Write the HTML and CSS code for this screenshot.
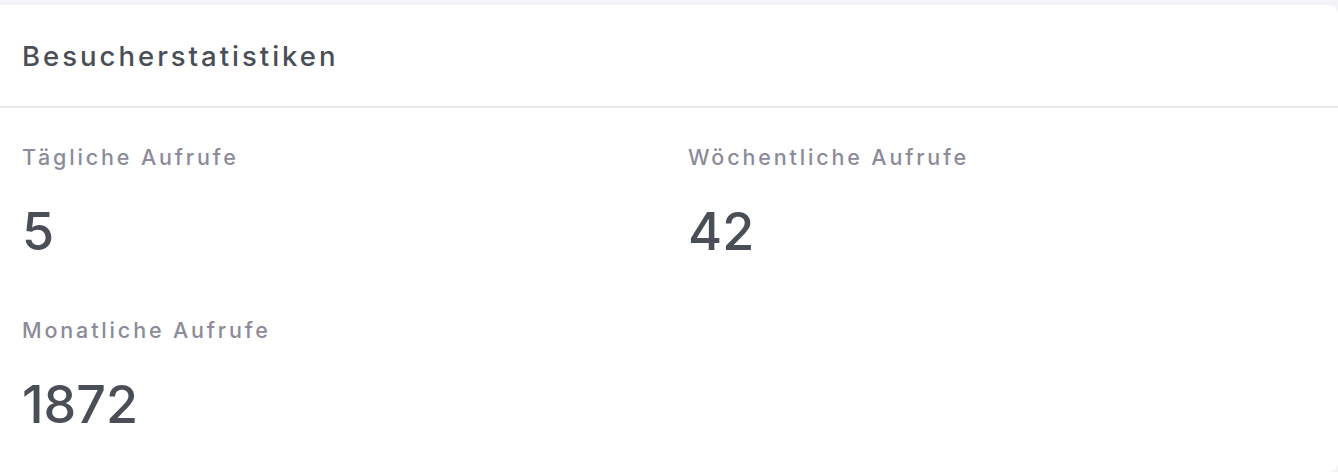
FILE: index.html
```html
<!DOCTYPE html>
<html lang="de">
<head>
  <meta charset="UTF-8">
  <meta name="viewport" content="width=device-width, initial-scale=1">
  <title>Besucherstatistiken</title>
  <link rel="stylesheet" href="styles.css">
</head>
<body>
  <div class="card">
    <div class="card-header">
      <h3>Besucherstatistiken</h3>
    </div>
    <div class="card-body">
      <div class="stat">
        <div class="stat-label">Tägliche Aufrufe</div>
        <div class="stat-value">5</div>
      </div>
      <div class="stat">
        <div class="stat-label">Wöchentliche Aufrufe</div>
        <div class="stat-value">42</div>
      </div>
      <div class="stat">
        <div class="stat-label">Monatliche Aufrufe</div>
        <div class="stat-value">1872</div>
      </div>
    </div>
  </div>
</body>
</html>
```

FILE: styles.css
```css
* {
  box-sizing: border-box;
}
body {
  margin: 0;
  padding-top: 5px;
  background-color: #f3f3f7;
  font-family: Inter, "Open Sans", sans-serif;
  color: #4a4e56;
}
.card {
  background: #fff;
  height: 467px;
  border-radius: 0 9px 9px 0;
}
.card-header {
  height: 103px;
  padding: 0 22px;
  display: flex;
  align-items: center;
  border-bottom: 2px solid #e8e8ea;
}
.card-header h3 {
  margin: 0;
  font-size: 27.5px;
  font-weight: 500;
  letter-spacing: 3px;
  color: #4a4e56;
}
.card-body {
  display: grid;
  grid-template-columns: 1fr 1fr;
  column-gap: 38px;
  padding: 34px 22px 0;
}
.stat {
  height: 173px;
}
.stat-label {
  font-size: 21.5px;
  font-weight: 500;
  letter-spacing: 2.85px;
  color: #8b8b99;
  line-height: 30px;
}
.stat-value {
  margin-top: 30px;
  font-size: 52px;
  font-weight: 500;
  line-height: 60px;
  color: #4a4e56;
}
```
